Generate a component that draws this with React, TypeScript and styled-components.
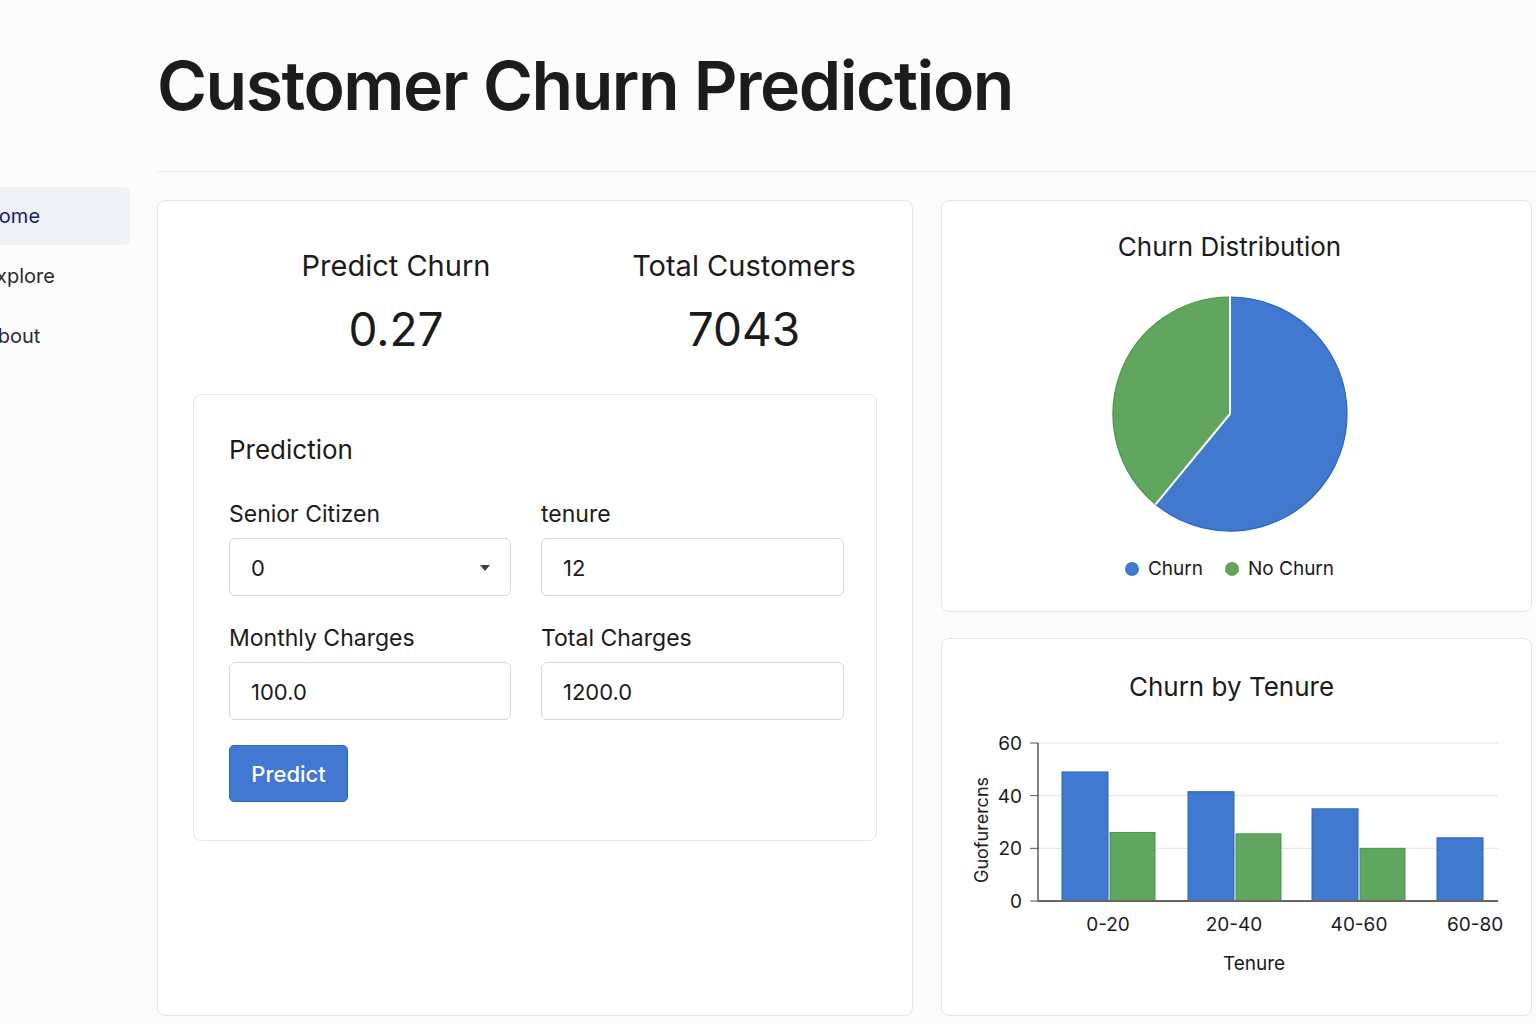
import React from 'react'
import styled, { createGlobalStyle } from 'styled-components'

const GlobalStyle = createGlobalStyle`
  html, body {
    margin: 0;
    padding: 0;
    background: #fcfcfd;
    overflow: hidden;
  }
  body {
    font-family: Inter, "Noto Sans", "Liberation Sans", sans-serif;
    color: #1b1b1b;
  }
  * { box-sizing: border-box; }
`

const Page = styled.div`
  width: 1536px;
  height: 1024px;
  display: flex;
  flex-direction: column;
`

const Header = styled.header`
  margin-left: 157px;
  height: 172px;
  padding-top: 42px;
  border-bottom: 1px solid #ececee;
`

const Title = styled.h1`
  margin: 0;
  font-size: 68px;
  font-weight: 600;
  letter-spacing: -1.5px;
  line-height: 86px;
  color: #1c1c1c;
`

const Body = styled.div`
  display: flex;
  flex: 1;
  min-height: 0;
`

// sidebar runs past the left edge, only the tail of each link shows
const Sidebar = styled.nav`
  width: 160px;
  margin-left: -30px;
  padding-top: 15px;
  display: flex;
  flex-direction: column;
  gap: 2px;
`

const NavItem = styled.a<{ $active?: boolean }>`
  display: flex;
  align-items: center;
  height: 58px;
  padding-left: 14px;
  font-size: 20px;
  color: ${p => (p.$active ? '#132372' : '#2a2a2a')};
  background: ${p => (p.$active ? '#f0f1f5' : 'transparent')};
  border-radius: 0 6px 6px 0;
  text-decoration: none;
`

const Content = styled.main`
  margin-left: 27px;
  padding: 28px 0 15px;
  display: grid;
  grid-template-columns: 756px 591px;
  column-gap: 28px;
  height: 100%;
`

const Card = styled.section`
  background: #fff;
  border: 1px solid #e4e6ea;
  border-radius: 8px;
`

const MainCard = styled(Card)`
  padding: 40px 35px 0 35px;
`

const Stats = styled.div`
  display: grid;
  grid-template-columns: 300px 300px;
  column-gap: 48px;
  margin-left: 53px;
`

const Stat = styled.div`
  text-align: center;
`

const StatLabel = styled.div`
  font-size: 29px;
  line-height: 50px;
`

const StatValue = styled.div`
  font-size: 46px;
  line-height: 72px;
  margin-top: 2px;
`

const FormCard = styled(Card)`
  margin-top: 29px;
  padding: 34px 35px 38px 35px;
`

const FormTitle = styled.h2`
  margin: 0 0 29px;
  font-size: 26px;
  font-weight: 400;
  line-height: 42px;
`

const FormGrid = styled.div`
  display: grid;
  grid-template-columns: 282px 303px;
  column-gap: 30px;
  row-gap: 28px;
`

const Field = styled.label`
  display: flex;
  flex-direction: column;
  gap: 10px;
`

const FieldLabel = styled.span`
  font-size: 23px;
  line-height: 28px;
`

const InputBox = styled.div`
  height: 58px;
  border: 1px solid #d6d9de;
  border-radius: 6px;
  background: #fff;
  display: flex;
  align-items: center;
  justify-content: space-between;
  padding: 2px 20px 0 21px;
  font-size: 22px;
`

const Caret = styled.span`
  width: 0;
  height: 0;
  border-left: 5px solid transparent;
  border-right: 5px solid transparent;
  border-top: 6px solid #3b3f4a;
`

const Button = styled.button`
  margin-top: 25px;
  width: 119px;
  height: 57px;
  background: #4278d1;
  border: 1px solid #2f66c4;
  border-radius: 5px;
  color: #fff;
  font-family: inherit;
  font-size: 22px;
  font-weight: 500;
`

const RightCol = styled.div`
  display: flex;
  flex-direction: column;
  gap: 26px;
`

const PieCard = styled(Card)`
  height: 412px;
  padding: 28px 14px 0 0;
  display: flex;
  flex-direction: column;
  align-items: center;
`

const BarCard = styled(Card)`
  flex: 1;
  padding-top: 30px;
`

const ChartTitle = styled.h3<{ $shift?: number }>`
  margin: 0;
  font-size: 26px;
  font-weight: 400;
  line-height: 36px;
  text-align: center;
  padding-right: ${p => p.$shift || 0}px;
`

const PieWrap = styled.div`
  margin-top: 30px;
`

const Legend = styled.div`
  margin-top: 20px;
  display: flex;
  gap: 22px;
  font-size: 19px;
`

const LegendItem = styled.div`
  display: flex;
  align-items: center;
  gap: 9px;
`

const Dot = styled.span<{ $color: string }>`
  width: 14px;
  height: 14px;
  border-radius: 50%;
  background: ${p => p.$color};
`

const BLUE = '#4179cf'
const BLUE_EDGE = '#2c63c8'
const GREEN = '#60a65f'
const GREEN_EDGE = '#4b944b'

const PieChart = () => {
  const cx = 119
  const cy = 119
  const r = 117
  const angle = (219.5 * Math.PI) / 180
  const px = cx + r * Math.sin(angle)
  const py = cy - r * Math.cos(angle)
  return (
    <svg width="238" height="238" viewBox="0 0 238 238">
      <path d={`M${cx},${cy} L${cx},${cy - r} A${r},${r} 0 1 1 ${px},${py} Z`} fill={BLUE} stroke={BLUE_EDGE} strokeWidth="1.2" />
      <path d={`M${cx},${cy} L${px},${py} A${r},${r} 0 0 1 ${cx},${cy - r} Z`} fill={GREEN} stroke={GREEN_EDGE} strokeWidth="1.2" />
      <line x1={cx} y1={cy} x2={cx} y2={cy - r - 1} stroke="#fff" strokeWidth="2" />
      <line x1={cx} y1={cy} x2={px} y2={py} stroke="#fff" strokeWidth="2" />
    </svg>
  )
}

const groups = [
  { label: '0-20', x: 120, churn: 49, stay: 26, lx: 166 },
  { label: '20-40', x: 246, churn: 41.5, stay: 25.5, lx: 292 },
  { label: '40-60', x: 370, churn: 35, stay: 20, lx: 417 },
  { label: '60-80', x: 495, churn: 24, stay: 0, lx: 533 },
]

const BarChart = () => {
  const base = 186
  const unit = 158 / 60
  const ticks = [0, 20, 40, 60]
  const font = 'Inter, "Noto Sans", sans-serif'
  return (
    <svg width="591" height="300" viewBox="0 0 591 300" style={{ display: 'block', marginTop: 10 }}>
      {ticks.map(t => (
        <g key={t}>
          {t > 0 && <line x1="96" x2="556" y1={base - t * unit} y2={base - t * unit} stroke="#e2e2e2" strokeWidth="1" />}
          <line x1="88" x2="96" y1={base - t * unit} y2={base - t * unit} stroke="#555" strokeWidth="1" />
          <text x="80" y={base - t * unit + 7} textAnchor="end" fontSize="19" fontFamily={font} fill="#1b1b1b">{t}</text>
        </g>
      ))}
      {groups.map(g => (
        <g key={g.label}>
          <rect x={g.x} y={base - g.churn * unit} width="46" height={g.churn * unit} fill={BLUE} stroke={BLUE_EDGE} strokeWidth="1" />
          {g.stay > 0 && (
            <rect x={g.x + 48} y={base - g.stay * unit} width="45" height={g.stay * unit} fill={GREEN} stroke={GREEN_EDGE} strokeWidth="1" />
          )}
          <text x={g.lx} y={base + 30} textAnchor="middle" fontSize="19" fontFamily={font} fill="#1b1b1b">{g.label}</text>
        </g>
      ))}
      <line x1="96" x2="96" y1={base - 60 * unit} y2={base} stroke="#333" strokeWidth="1.2" />
      <line x1="96" x2="556" y1={base} y2={base} stroke="#666" strokeWidth="2" />
      <text x="312" y={base + 69} textAnchor="middle" fontSize="19" fontFamily={font} fill="#1b1b1b">Tenure</text>
      <text x="0" y="0" transform={`translate(46 ${base - 71}) rotate(-90)`} textAnchor="middle" fontSize="18" fontFamily={font} fill="#1b1b1b">Guofurercns</text>
    </svg>
  )
}

export default function App() {
  return (
    <Page>
      <GlobalStyle />
      <Header>
        <Title>Customer Churn Prediction</Title>
      </Header>
      <Body>
        <Sidebar>
          <NavItem $active href="#">Home</NavItem>
          <NavItem href="#">Explore</NavItem>
          <NavItem href="#">About</NavItem>
        </Sidebar>
        <Content>
          <MainCard>
            <Stats>
              <Stat>
                <StatLabel>Predict Churn</StatLabel>
                <StatValue>0.27</StatValue>
              </Stat>
              <Stat>
                <StatLabel>Total Customers</StatLabel>
                <StatValue>7043</StatValue>
              </Stat>
            </Stats>
            <FormCard>
              <FormTitle>Prediction</FormTitle>
              <FormGrid>
                <Field>
                  <FieldLabel>Senior Citizen</FieldLabel>
                  <InputBox>0<Caret /></InputBox>
                </Field>
                <Field>
                  <FieldLabel>tenure</FieldLabel>
                  <InputBox>12</InputBox>
                </Field>
                <Field>
                  <FieldLabel>Monthly Charges</FieldLabel>
                  <InputBox>100.0</InputBox>
                </Field>
                <Field>
                  <FieldLabel>Total Charges</FieldLabel>
                  <InputBox>1200.0</InputBox>
                </Field>
              </FormGrid>
              <Button>Predict</Button>
            </FormCard>
          </MainCard>
          <RightCol>
            <PieCard>
              <ChartTitle>Churn Distribution</ChartTitle>
              <PieWrap>
                <PieChart />
              </PieWrap>
              <Legend>
                <LegendItem><Dot $color={BLUE} />Churn</LegendItem>
                <LegendItem><Dot $color={GREEN} />No Churn</LegendItem>
              </Legend>
            </PieCard>
            <BarCard>
              <ChartTitle $shift={10}>Churn by Tenure</ChartTitle>
              <BarChart />
            </BarCard>
          </RightCol>
        </Content>
      </Body>
    </Page>
  )
}
